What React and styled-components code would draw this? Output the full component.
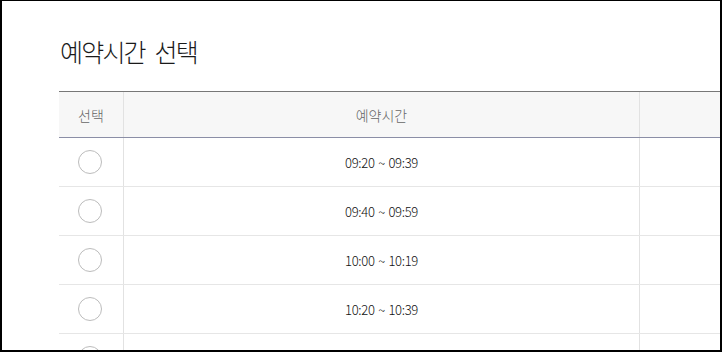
import React from "react";
import styled, { createGlobalStyle } from "styled-components";

const Global = createGlobalStyle`
  html, body { margin: 0; padding: 0; background: #fff; }
  body { font-family: "Noto Sans CJK KR", "Noto Sans", sans-serif; }
  * { box-sizing: border-box; }
`;

const Frame = styled.div`
  width: 722px;
  height: 352px;
  border-style: solid;
  border-color: #000;
  border-width: 1px 2px 2px 2px;
  overflow: hidden;
  padding: 35px 0 0 57px;
  background: #fff;
`;

const Title = styled.h2`
  margin: 0 0 25px 1px;
  font-size: 25px;
  line-height: 30px;
  font-weight: 300;
  letter-spacing: -1.8px;
  word-spacing: 6px;
  color: #1a1a1a;
`;

const Table = styled.div`
  width: 760px;
  border-top: 1px solid #777;
`;

const Row = styled.div`
  display: grid;
  grid-template-columns: 65px 516px 1fr;
  height: ${(p) => (p.$head ? "46px" : "49px")};
  background: ${(p) => (p.$head ? "#f7f7f7" : "#fff")};
  border-bottom: 1px solid ${(p) => (p.$head ? "#8b8ea6" : "#e6e6e6")};
`;

const Cell = styled.div`
  display: flex;
  align-items: center;
  justify-content: center;
  border-right: 1px solid #e2e2e2;
  font-size: ${(p) => (p.$head ? "14px" : "13px")};
  font-weight: 300;
  color: ${(p) => (p.$head ? "#666" : "#111")};
  letter-spacing: ${(p) => (p.$head ? "0" : "-0.3px")};
  word-spacing: ${(p) => (p.$head ? "0" : "1px")};
  white-space: nowrap;
`;

const Radio = styled.span`
  display: block;
  width: 24px;
  height: 24px;
  border-radius: 50%;
  border: 1px solid #bcbcbc;
  background: #fff;
  margin-right: 3px;
`;

const times = ["09:20 ~ 09:39", "09:40 ~ 09:59", "10:00 ~ 10:19", "10:20 ~ 10:39", ""];

export default function App() {
  return (
    <>
      <Global />
      <Frame>
        <Title>예약시간 선택</Title>
        <Table>
          <Row $head>
            <Cell $head>선택</Cell>
            <Cell $head>예약시간</Cell>
            <Cell $head />
          </Row>
          {times.map((t, i) => (
            <Row key={i}>
              <Cell>
                <Radio />
              </Cell>
              <Cell>{t}</Cell>
              <Cell />
            </Row>
          ))}
        </Table>
      </Frame>
    </>
  );
}
